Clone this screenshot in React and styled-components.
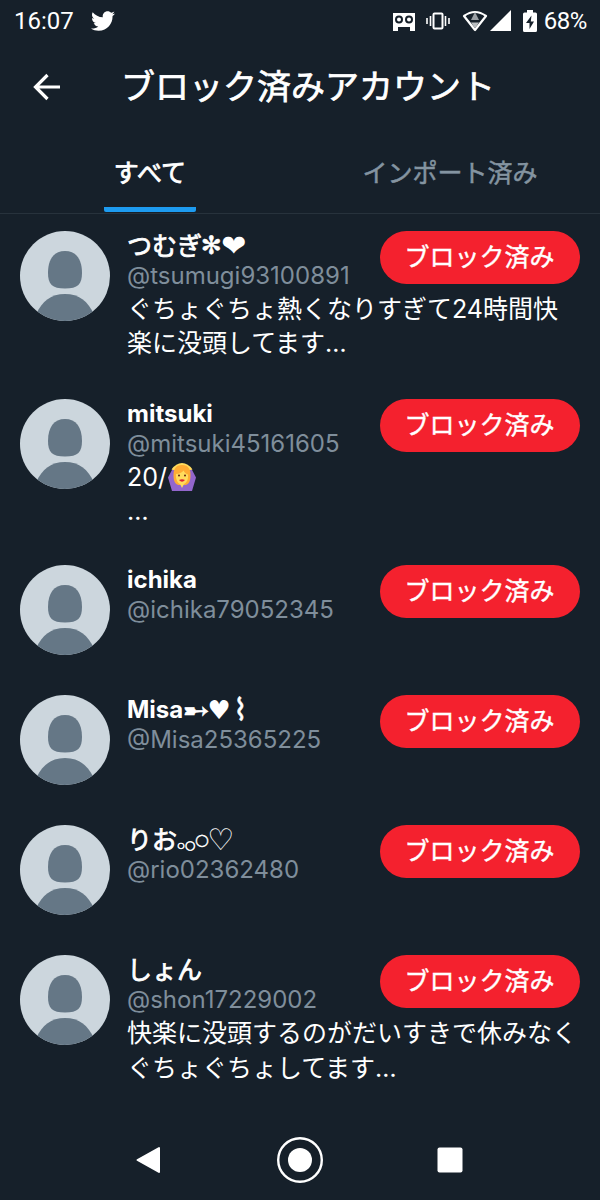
import * as React from 'react'
import styled, { createGlobalStyle } from 'styled-components'
import { FaTwitter } from 'react-icons/fa'

const App = () => {
  return (
    <Screen>
      <GlobalStyle />
      <StatusBar />
      <Header>
        <BackButton aria-label="戻る">
          <svg width="30" height="30" viewBox="0 0 30 30" fill="none" stroke="#fff" strokeWidth="3.2">
            <path d="M29 15H5M16.5 3l-12 12 12 12" />
          </svg>
        </BackButton>
        <Title>ブロック済みアカウント</Title>
      </Header>
      <Tabs>
        <Tab>
          <TabLabel $active>すべて</TabLabel>
        </Tab>
        <Tab>
          <TabLabel>インポート済み</TabLabel>
        </Tab>
      </Tabs>
      <List>
        {accounts.map((account) => (
          <Account key={account.handle} {...account} />
        ))}
      </List>
      <NavBar />
    </Screen>
  )
}

const StatusBar = () => (
  <Status>
    <Clock>16:07</Clock>
    <FaTwitter size={24} />
    <StatusIcons>
      <svg width="22" height="20" viewBox="0 0 22 20">
        <path fill="#fff" d="M0 2h22v18h-5v-4H5v4H0z" />
        <g fill="#fff" stroke="#16202a" strokeWidth="2">
          <circle cx="6" cy="8.5" r="3" />
          <circle cx="16" cy="8.5" r="3" />
        </g>
      </svg>
      <svg width="24" height="18" viewBox="0 0 24 18" fill="none" stroke="#fff" strokeWidth="2">
        <rect x="7.5" y="1.5" width="9" height="15" rx="1" />
        <path d="M4.5 4v10M19.5 4v10M1 6v6M23 6v6" strokeWidth="1.6" />
      </svg>
      <svg width="26" height="22" viewBox="0 0 26 22">
        <path d="M2 6Q13-2 24 6L13 20z" fill="none" stroke="#fff" strokeWidth="2.2" strokeLinejoin="round" />
        <path d="M13 2l4 8H9z" fill="#999ea3" />
        <path d="M9 12.5h8l-4 6z" fill="#b9bdc0" />
      </svg>
      <svg width="21" height="21" viewBox="0 0 21 21">
        <path d="M21 0v21H0z" fill="#fff" />
      </svg>
      <svg width="14" height="22" viewBox="0 0 14 22">
        <path d="M4 0h6v2.5h2.5q1.5 0 1.5 1.5v16.5q0 1.5-1.5 1.5h-11Q0 22 0 20.5V4q0-1.5 1.5-1.5H4z" fill="#fff" />
        <path d="M8.5 5.5L3 13h3.5v6L11 11.5H7.8z" fill="#16202a" />
      </svg>
    </StatusIcons>
    <Battery>68%</Battery>
  </Status>
)

const Account = ({ name, handle, bio, lineHeight, bottom }) => (
  <Row $bottom={bottom}>
    <Avatar viewBox="0 0 90 90">
      <clipPath id={handle}>
        <circle cx="45" cy="45" r="45" />
      </clipPath>
      <g clipPath={`url(#${handle})`}>
        <rect width="90" height="90" fill="#ccd6dd" />
        <path d="M45 20c11 0 17 8 17 22 0 11-4 15.5-17 15.5S28 53 28 42c0-14 6-22 17-22z" fill="#657786" />
        <path d="M45 63c14 0 23 7.5 28.500 19.500V92h-57v-9.500C22 70.500 31 63 45 63z" fill="#657786" />
      </g>
    </Avatar>
    <Body>
      <Top>
        <Names>
          <Name>{name}</Name>
          <Handle>{handle}</Handle>
        </Names>
        <BlockButton>ブロック済み</BlockButton>
      </Top>
      {bio && <Bio $lineHeight={lineHeight}>{bio}</Bio>}
    </Body>
  </Row>
)

const NavBar = () => (
  <Nav>
    <svg width="28" height="28" viewBox="0 0 28 28">
      <path d="M24 2v24L2.5 14z" fill="#fff" stroke="#fff" strokeWidth="2" strokeLinejoin="round" />
    </svg>
    <svg width="48" height="48" viewBox="0 0 48 48">
      <circle cx="24" cy="24" r="21.8" fill="none" stroke="#fff" strokeWidth="2.4" />
      <circle cx="24" cy="24" r="12" fill="#fff" />
    </svg>
    <svg width="26" height="26" viewBox="0 0 26 26">
      <rect x="0.5" y="0.5" width="25" height="25" rx="2" fill="#fff" />
    </svg>
  </Nav>
)

const OkWoman = () => (
  <Emoji viewBox="0 0 28 28">
    <path d="M5 5L0 14.5l4 13.5h20l4-13.5L23 5l-4 6H9z" fill="#9266cc" />
    <path d="M3.5 6.500Q8 0 14 0t10.500 6.500l-4 1h-13z" fill="#ffdc5d" />
    <path d="M14 2C7 2 5.5 7 5.5 12c0 5 1 9 5 10h7c4-1 5-5 5-10 0-5-1.5-10-8.5-10z" fill="#ffac33" />
    <path d="M8 11c3 0 6-1.5 7.5-3.5 1 2 2.500 3.500 4.500 4 .5 5-1.500 8.500-4 9.500l-2 4-2-4c-2.500-1-4.500-5-4-10z" fill="#ffdc5d" />
    <circle cx="11" cy="12.5" r="1" fill="#662113" />
    <circle cx="17" cy="12.5" r="1" fill="#662113" />
    <path d="M11 17q3-1.500 6 0-3 3.500-6 0z" fill="#df1f32" />
  </Emoji>
)

const GlobalStyle = createGlobalStyle`
  * {
    box-sizing: border-box;
  }
  body {
    margin: 0;
    background: #16202a;
  }
`
const Screen = styled.div`
  display: flex;
  flex-direction: column;
  width: 600px;
  height: 1200px;
  overflow: hidden;
  background: #16202a;
  color: #fff;
  font-family: Inter, 'Noto Sans CJK JP', sans-serif;
`
const Status = styled.div`
  display: flex;
  align-items: center;
  flex: none;
  height: 41px;
  padding: 0 13px 0 14px;
  font-family: Roboto, sans-serif;
  font-size: 24px;
`
const Clock = styled.span`
  width: 77px;
`
const StatusIcons = styled.div`
  display: flex;
  align-items: center;
  margin-left: auto;

  svg:nth-child(2) {
    margin-left: 11px;
  }
  svg:nth-child(3) {
    margin-left: 12px;
  }
  svg:nth-child(4) {
    margin-left: 2px;
  }
  svg:nth-child(5) {
    margin-left: 12px;
  }
`
const Battery = styled.span`
  margin-left: 7px;
  letter-spacing: -0.4px;
`
const Header = styled.header`
  display: flex;
  align-items: center;
  flex: none;
  height: 91px;
  padding-left: 31px;
`
const BackButton = styled.button`
  display: flex;
  width: 90px;
  padding: 0;
  border: 0;
  background: none;
`
const Title = styled.h1`
  margin: 0;
  font-size: 34px;
  font-weight: 400;
  line-height: 48px;
  -webkit-text-stroke: 0.7px currentColor;
`
const Tabs = styled.nav`
  display: flex;
  flex: none;
  height: 82px;
  border-bottom: 1px solid #27323c;
`
const Tab = styled.div`
  display: flex;
  justify-content: center;
  flex: 1;
`
const TabLabel = styled.span`
  height: 80px;
  padding: 0 10px;
  border-bottom: 5px solid ${({ $active }) => ($active ? '#1d9bf0' : 'transparent')};
  border-radius: 2px;
  color: ${({ $active }) => ($active ? '#fff' : '#8494a1')};
  font-size: 25px;
  line-height: 82px;
  -webkit-text-stroke: ${({ $active }) => ($active ? '0.8px' : '0.5px')} currentColor;
`
const List = styled.main`
  flex: 1;
`
const Row = styled.article`
  display: flex;
  min-height: 130px;
  padding: 17px 20px ${({ $bottom = 22 }) => $bottom}px;
`
const Avatar = styled.svg`
  flex: none;
  width: 90px;
  height: 90px;
  margin-right: 17px;
`
const Body = styled.div`
  flex: 1;
  min-width: 0;
`
const Top = styled.div`
  display: flex;
  justify-content: space-between;
  height: 61px;
`
const Names = styled.div`
  width: 253px;
  white-space: nowrap;
`
const Name = styled.div`
  display: flex;
  align-items: center;
  height: 30px;
  font-size: 24px;
  font-weight: 700;
  line-height: 30px;
`
const Kana = styled.span`
  font-size: 25px;
  font-weight: 400;
  -webkit-text-stroke: 0.8px currentColor;
`
const Glyph = styled.span`
  display: inline-flex;
  justify-content: center;
  width: ${({ $width }) => $width}px;
  padding-top: ${({ $shift = 0 }) => $shift * 2}px;
  font-family: 'DejaVu Sans', sans-serif;
  font-size: ${({ $size }) => $size}px;
  font-weight: 400;
  -webkit-text-stroke: ${({ $stroke = 0 }) => $stroke}px currentColor;
`
const Handle = styled.div`
  color: #7f8e9b;
  font-size: 24px;
  line-height: 29px;
`
const BlockButton = styled.button`
  flex: none;
  width: 200px;
  height: 53px;
  padding: 0 1px 5px 0;
  border: 0;
  border-radius: 27px;
  background: #f4212e;
  color: #fff;
  font-family: inherit;
  font-size: 25px;
  -webkit-text-stroke: 0.4px currentColor;
`
const Bio = styled.p`
  margin: 0;
  font-size: 25px;
  line-height: ${({ $lineHeight }) => $lineHeight}px;
`
const Emoji = styled.svg`
  width: 28px;
  height: 28px;
  margin-left: 1px;
  vertical-align: -5px;
`
const Nav = styled.footer`
  display: flex;
  align-items: center;
  justify-content: space-between;
  flex: none;
  height: 80px;
  padding: 0 137px 0 135px;
`

const accounts = [
  {
    name: (
      <>
        <Kana>つむぎ</Kana>
        <Glyph $width={19} $size={25} $stroke={0.5}>✻</Glyph>
        <Glyph $width={25} $size={30}>❤</Glyph>
      </>
    ),
    handle: '@tsumugi93100891',
    bio: 'ぐちょぐちょ熱くなりすぎて24時間快楽に没頭してます…',
    lineHeight: 34,
  },
  {
    name: 'mitsuki',
    handle: '@mitsuki45161605',
    bio: (
      <>
        20/
        <OkWoman />
        <br />…
      </>
    ),
    lineHeight: 34,
    bottom: 20,
  },
  { name: 'ichika', handle: '@ichika79052345' },
  {
    name: (
      <>
        Misa
        <Glyph $width={26} $size={31} $stroke={0.8}>➸</Glyph>
        <Glyph $width={20} $size={26}>♥</Glyph>
        <Glyph $width={22} $size={30} $stroke={0.5}>⌇</Glyph>
      </>
    ),
    handle: '@Misa25365225',
  },
  {
    name: (
      <>
        <Kana>りお</Kana>
        <Glyph $width={8} $size={8} $shift={6} $stroke={0.7}>○</Glyph>
        <Glyph $width={10} $size={12} $shift={5} $stroke={0.6}>○</Glyph>
        <Glyph $width={14} $size={16} $stroke={0.4}>○</Glyph>
        <Glyph $width={23} $size={30}>♡</Glyph>
      </>
    ),
    handle: '@rio02362480',
  },
  {
    name: <Kana>しょん</Kana>,
    handle: '@shon17229002',
    bio: '快楽に没頭するのがだいすきで休みなくぐちょぐちょしてます…',
    lineHeight: 35,
  },
]

export default App
